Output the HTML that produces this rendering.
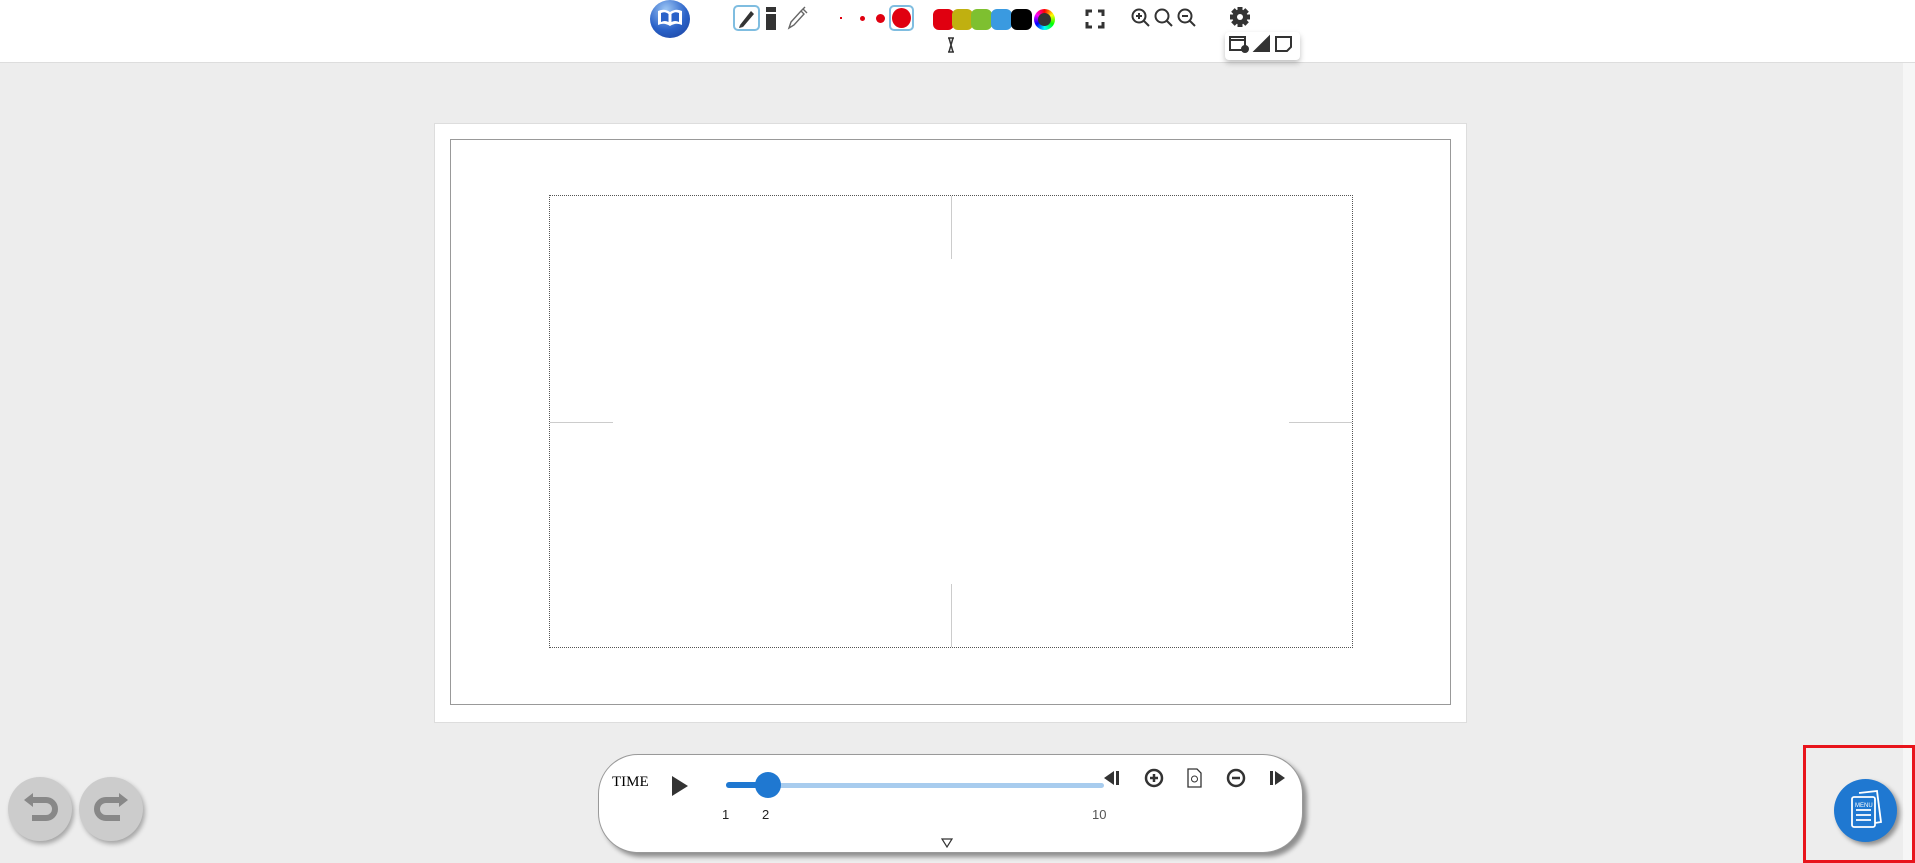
<!DOCTYPE html>
<html><head><style>
body{margin:0;width:1915px;height:863px;background:#ededed;position:relative;overflow:hidden;font-family:"Liberation Sans",sans-serif}
.a{position:absolute}
</style></head><body>
<div class="a" style="left:0;top:0;width:1915px;height:62px;background:#fff;border-bottom:1px solid #ddd"></div>
<div class="a" style="left:1903px;top:63px;width:12px;height:800px;background:#f6f6f6"></div>
<!-- book -->
<div class="a" style="left:650px;top:0px;width:40px;height:38px;border-radius:50%;background:radial-gradient(circle at 40% 25%,#9cc6f5,#2a62c8 55%,#1a3f9a)"></div>
<svg class="a" style="left:656px;top:7px" width="28" height="22"><path d="M2 4Q8 1 14 5Q20 1 26 4V18Q20 15 14 19Q8 15 2 18Z" fill="#fff"/><path d="M5 6Q9 4 12.5 7V15Q9 13 5 15Z M15.5 7Q19 4 23 6V15Q19 13 15.5 15Z" fill="#2a62c8"/></svg>
<!-- pencil box -->
<div class="a" style="left:733px;top:5px;width:27px;height:26px;border:2px solid #7fbde0;border-radius:5px;box-sizing:border-box"></div>
<svg class="a" style="left:737px;top:8px" width="20" height="20"><path d="M3 17 L14 3 L17 6 L6 19 Z" fill="#333"/><path d="M3 17L2 20L6 19Z" fill="#333"/></svg>
<div class="a" style="left:766px;top:7px;width:10px;height:23px;background:#333"></div>
<div class="a" style="left:766px;top:12px;width:10px;height:2px;background:#fff"></div>
<svg class="a" style="left:786px;top:6px" width="22" height="24"><path d="M3 22 L5 16 L15 5 L18 8 L8 19 Z M15 5 L19 1 M17 3L21 7" fill="none" stroke="#666" stroke-width="1.4"/></svg>
<!-- dots -->
<div class="a" style="left:840px;top:17px;width:2px;height:2px;background:#e00010"></div>
<div class="a" style="left:860px;top:16px;width:5px;height:5px;border-radius:50%;background:#e00010"></div>
<div class="a" style="left:876px;top:14px;width:9px;height:9px;border-radius:50%;background:#e00010"></div>
<div class="a" style="left:889px;top:5px;width:25px;height:26px;border:2px solid #7fbde0;border-radius:5px;box-sizing:border-box"></div>
<div class="a" style="left:892px;top:8px;width:19px;height:20px;border-radius:50%;background:#e00010"></div>
<svg class="a" style="left:946px;top:36px" width="10" height="18"><path d="M2 2 H8 M2 16 H8 M3 2 L5 9 L3 16 M7 2 L5 9 L7 16" fill="none" stroke="#333" stroke-width="1.5"/></svg>
<!-- colors -->
<div class="a" style="left:933px;top:9px;width:21px;height:21px;border-radius:6px;background:#e00010"></div>
<div class="a" style="left:952px;top:9px;width:21px;height:21px;border-radius:6px;background:#c0b010"></div>
<div class="a" style="left:971px;top:9px;width:21px;height:21px;border-radius:6px;background:#7ec030"></div>
<div class="a" style="left:991px;top:9px;width:21px;height:21px;border-radius:6px;background:#3a9ae0"></div>
<div class="a" style="left:1011px;top:9px;width:21px;height:21px;border-radius:6px;background:#000"></div>
<div class="a" style="left:1034px;top:9px;width:21px;height:21px;border-radius:50%;background:conic-gradient(red,yellow,lime,cyan,blue,magenta,red)"></div>
<div class="a" style="left:1038px;top:13px;width:13px;height:13px;border-radius:50%;background:#333"></div>
<!-- fullscreen -->
<svg class="a" style="left:1085px;top:9px" width="20" height="20" fill="none" stroke="#333" stroke-width="3"><path d="M2 7V2H7M13 2H18V7M18 13V18H13M7 18H2V13"/></svg>
<svg class="a" style="left:1130px;top:7px" width="70" height="22" fill="none" stroke="#333" stroke-width="2"><circle cx="9" cy="9" r="6.5"/><path d="M14 14L19 19M6 9H12M9 6V12"/><circle cx="32" cy="9" r="6.5"/><path d="M37 14L42 19"/><circle cx="55" cy="9" r="6.5"/><path d="M60 14L65 19M52 9H58"/></svg>
<svg class="a" style="left:1229px;top:6px" width="22" height="22"><g fill="#333" transform="translate(11 11)"><rect x="-2.5" y="-10" width="5" height="20"/><rect x="-2.5" y="-10" width="5" height="20" transform="rotate(45)"/><rect x="-2.5" y="-10" width="5" height="20" transform="rotate(90)"/><rect x="-2.5" y="-10" width="5" height="20" transform="rotate(135)"/><circle r="7.5"/><circle r="3" fill="#fff"/></g></svg>
<!-- popup -->
<div class="a" style="left:1225px;top:32px;width:75px;height:28px;background:#fff;border-radius:4px;box-shadow:0 3px 6px rgba(0,0,0,.25)"></div>
<svg class="a" style="left:1228px;top:34px" width="70" height="22" fill="none" stroke="#333" stroke-width="2"><rect x="2" y="3" width="15" height="13"/><path d="M2 6H17"/><circle cx="17" cy="15" r="3" fill="#333"/><path d="M27 17L41 3V17Z" fill="#333"/><path d="M48 3H63V13L59 17H48Z"/></svg>
<!-- canvas -->
<div class="a" style="left:434px;top:123px;width:1033px;height:600px;background:#fff;border:1px solid #ddd;box-sizing:border-box"></div>
<div class="a" style="left:450px;top:139px;width:1001px;height:566px;border:1px solid #999;box-sizing:border-box"></div>
<div class="a" style="left:549px;top:195px;width:804px;height:453px;border:1px dotted #555;box-sizing:border-box"></div>
<div class="a" style="left:951px;top:196px;width:1px;height:63px;background:#ccc"></div>
<div class="a" style="left:951px;top:584px;width:1px;height:63px;background:#ccc"></div>
<div class="a" style="left:550px;top:422px;width:63px;height:1px;background:#ccc"></div>
<div class="a" style="left:1289px;top:422px;width:63px;height:1px;background:#ccc"></div>
<!-- undo redo -->
<div class="a" style="left:8px;top:777px;width:64px;height:64px;border-radius:50%;background:#ccc;box-shadow:2px 3px 5px rgba(0,0,0,.3)"></div>
<div class="a" style="left:79px;top:777px;width:64px;height:64px;border-radius:50%;background:#ccc;box-shadow:2px 3px 5px rgba(0,0,0,.3)"></div>
<svg class="a" style="left:20px;top:792px" width="40" height="36" fill="none" stroke="#888" stroke-width="6"><path d="M10 8H26A9 9 0 0 1 26 26H12"/><path d="M4 8L13 1V15Z" fill="#888" stroke="none"/></svg>
<svg class="a" style="left:92px;top:792px" width="40" height="36" fill="none" stroke="#888" stroke-width="6"><path d="M30 8H14A9 9 0 0 0 14 26H28"/><path d="M36 8L27 1V15Z" fill="#888" stroke="none"/></svg>
<!-- timeline -->
<div class="a" style="left:598px;top:754px;width:705px;height:99px;background:#fff;border:1px solid #999;border-radius:40px;box-sizing:border-box;box-shadow:4px 4px 5px rgba(0,0,0,.4)"></div>
<div class="a" style="left:612px;top:774px;font-family:'Liberation Serif',serif;font-size:15px;color:#000">TIME</div>
<svg class="a" style="left:670px;top:775px" width="20" height="22"><path d="M2 1L18 11L2 21Z" fill="#333"/></svg>
<div class="a" style="left:726px;top:783px;width:378px;height:5px;background:#a8ccee;border-radius:3px"></div>
<div class="a" style="left:726px;top:782px;width:40px;height:6px;background:#1f78d1;border-radius:3px"></div>
<div class="a" style="left:755px;top:772px;width:26px;height:26px;border-radius:50%;background:#1f78d1"></div>
<div class="a" style="left:722px;top:807px;font-size:13px;color:#222">1</div>
<div class="a" style="left:762px;top:807px;font-size:13px;color:#222">2</div>
<div class="a" style="left:1092px;top:807px;font-size:13px;color:#555">10</div>
<svg class="a" style="left:1100px;top:766px" width="200" height="24" fill="#333"><path d="M4 12L14 5V19Z"/><rect x="16" y="5" width="3" height="14"/><circle cx="54" cy="12" r="8" fill="none" stroke="#333" stroke-width="2.5"/><path d="M50 12H58M54 8V16" stroke="#333" stroke-width="2.5"/><path d="M88 3H97L101 7V21H88Z" fill="none" stroke="#333" stroke-width="1.3"/><circle cx="94.5" cy="13" r="3" fill="none" stroke="#333"/><circle cx="136" cy="12" r="8" fill="none" stroke="#333" stroke-width="2.5"/><path d="M132 12H140" stroke="#333" stroke-width="2.5"/><rect x="170" y="5" width="3" height="14"/><path d="M175 5L185 12L175 19Z"/></svg>
<svg class="a" style="left:941px;top:838px" width="12" height="10"><path d="M1 1H11L6 9Z" fill="none" stroke="#333" stroke-width="1.2"/></svg>
<!-- menu -->
<div class="a" style="left:1803px;top:745px;width:112px;height:118px;border:3px solid #e8141c;box-sizing:border-box"></div>
<div class="a" style="left:1834px;top:779px;width:63px;height:63px;border-radius:50%;background:#1f78d1;box-shadow:3px 3px 5px rgba(0,0,0,.4)"></div>
<svg class="a" style="left:1845px;top:788px" width="42" height="46" fill="none" stroke="#fff" stroke-width="1.8"><path d="M14 5L32 3L36 34L30 35"/><rect x="7" y="9" width="23" height="30" rx="2"/><path d="M11 22H26M11 27H26M11 32H26"/><text x="10" y="19" font-size="6" fill="#fff" stroke="none" font-family="Liberation Sans">MENU</text></svg>
</body></html>
